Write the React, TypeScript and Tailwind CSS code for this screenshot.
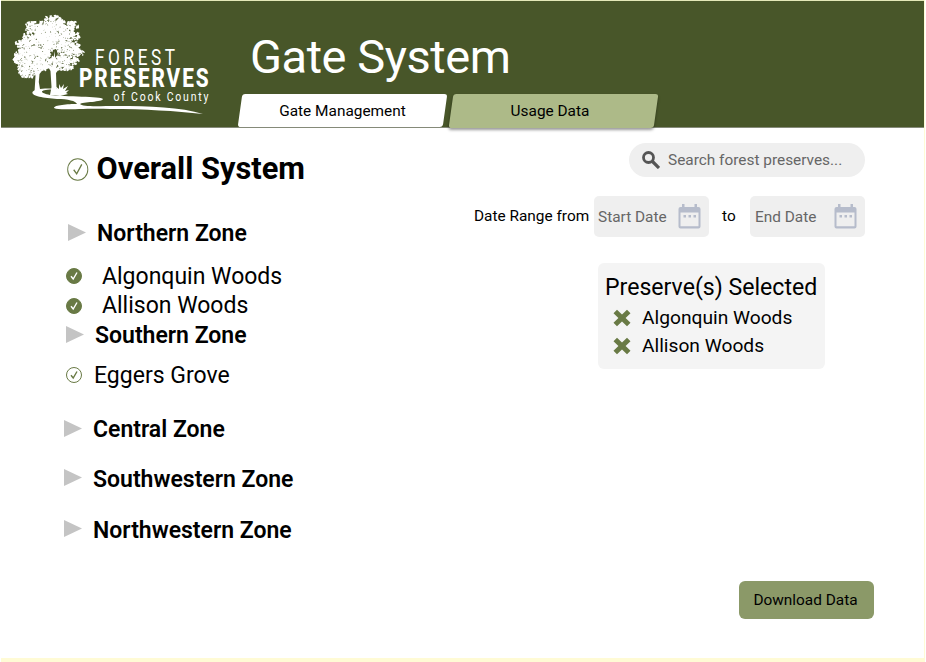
import React from "react";

const lobes: [number, number, number, number][] = [
  [53, 22, 9, 6], [33, 27, 8, 5], [43, 29, 9, 7], [66, 26, 12, 5], [60, 31, 12, 7],
  [37, 37, 13, 7], [52, 39, 12, 7], [70, 36, 9, 5], [24, 44, 8, 4], [35, 47, 14, 7],
  [63, 44, 9, 6], [73, 46, 7, 5], [49, 47, 7, 7], [22, 54, 7, 5], [32, 56, 13, 8],
  [18, 60, 6, 3], [44, 58, 8, 7], [67, 53, 11, 4], [77, 53, 7, 3], [60, 60, 9, 5],
  [71, 61, 8, 4], [27, 66, 9, 5], [39, 67, 8, 4], [59, 67, 7, 3], [28, 74, 7, 4],
  [23, 69, 5, 4], [67, 67, 6, 3], [46, 65, 5, 4],
];

function makeFoliage() {
  let seed = 29;
  const rnd = () => {
    seed = (seed * 1103515245 + 12345) % 2147483648;
    return seed / 2147483648;
  };
  let leaves = "";
  let gaps = "";
  const leaf = (x: number, y: number, s: number) => {
    const p = [0, 1, 2, 3, 4].map((i) => {
      const a = (i / 5) * Math.PI * 2 + rnd();
      const r = s * (0.5 + rnd());
      return `${(x + Math.cos(a) * r).toFixed(1)} ${(y + Math.sin(a) * r).toFixed(1)}`;
    });
    return `M${p.join("L")}Z`;
  };
  lobes.forEach(([cx, cy, rx, ry]) => {
    for (let i = 0; i < rx * ry * 1.9; i++) {
      const a = rnd() * Math.PI * 2;
      const r = Math.pow(rnd(), 0.6) * 1.08;
      leaves += leaf(cx + Math.cos(a) * rx * r, cy + Math.sin(a) * ry * r, 1.25);
    }
    const count = cx > 50 ? 5 : 2;
    for (let i = 0; i < count; i++) {
      const a = rnd() * Math.PI * 2;
      const r = 0.4 + rnd() * 0.6;
      gaps += leaf(cx + Math.cos(a) * rx * r, cy + Math.sin(a) * ry * r, 0.5);
    }
  });
  return { leaves, gaps };
}

const foliage = makeFoliage();

function Logo() {
  return (
    <svg className="block h-[126px] w-[230px] shrink-0" viewBox="1 1 230 126" fill="#fff">
      <path d={foliage.leaves} />
      <path d={foliage.gaps} fill="#485629" />
      <path d="M53 50L56 49L58 54L55 58L52 55Z" fill="#485629" />
      <path d="M33 66L35.500 76L34.500 92L40.500 92L38.800 82L39.500 74L45 67L38 71Z" />
      <path d="M46 63L50.500 71L51.500 87L50 95L61 95L56.500 88L56 73L62 65L56 68L54.500 51L52.500 67Z" />
      <path d="M55 95L57 89L55 86L59 89L59 84L61 88L64 84L63 89L68 86L65 91L69 90L66 93L68 94L60 96Z" />
      <path d="M52 88.500C43 88 34 89 32.500 92C31 96 44 98 57 99C68 99 76 101 77 104C68 104 54 105 54 108C60 111 80 108 110 109C145 109 175 111 203 114C181 107 149 106 117 106C98 106 82 107 80 104C82 102 103 102 103 99C101 96 66 97 50 95C40 93 38 90 52 89.500Z" />
      <g fontFamily="Roboto, 'Liberation Sans', sans-serif">
        <text transform="translate(95 64.500) scale(.8 1)" fontSize="21.500" fontWeight="400" textLength="100" lengthAdjust="spacing">FOREST</text>
        <text transform="translate(79 87.300) scale(.82 1)" fontSize="25.300" fontWeight="800" textLength="158" lengthAdjust="spacing">PRESERVES</text>
        <text transform="translate(113.500 101) scale(.84 1)" fontSize="12.500" fontWeight="400" textLength="113" lengthAdjust="spacing">of Cook County</text>
      </g>
    </svg>
  );
}

function Arrow() {
  return (
    <svg className="mb-[2px] h-[17px] w-[18px] shrink-0" viewBox="0 0 18 17">
      <path d="M0 0L18 8.500L0 17Z" fill="#c4c4c4" />
    </svg>
  );
}

function Check({ filled = false, className, weight = 1 }: { filled?: boolean; className: string; weight?: number }) {
  return (
    <svg className={`shrink-0 ${className}`} viewBox="0 0 16 16" fill="none" preserveAspectRatio="none">
      <circle cx="8" cy="8" r="7.500" fill={filled ? "#697a45" : "none"} stroke="#697a45" strokeWidth={weight} />
      <path d="M5 8.200L7.200 11L11 4.500" stroke={filled ? "#fff" : "#697a45"} strokeWidth={weight * 1.4} />
    </svg>
  );
}

function Cross() {
  return (
    <svg className="mb-[2px] h-[18px] w-[18px]" viewBox="0 0 18 18">
      <path d="M0.500 4.200L4 0.700L9 5.500L14 0.700L17.500 4.200L12.600 9L17.500 13.800L14 17.300L9 12.500L4 17.300L0.500 13.800L5.400 9Z" fill="#697a45" />
    </svg>
  );
}

function CalendarIcon() {
  return (
    <svg className="mb-px h-[25px] w-[23px]" viewBox="0 0 23 25">
      <path fillRule="evenodd" fill="#b6bccb" d="M4 0H6.500V3H16.500V0H19V3H20.500Q22.500 3 22.500 5V22.500Q22.500 24.500 20.500 24.500H2.500Q.5 24.500 .5 22.500V5Q.5 3 2.500 3H4ZM2.500 8.500V22.300H20.500V8.500Z" />
      <path fill="#b6bccb" d="M5.500 11H8V13.500H5.500ZM10.500 11H13V13.500H10.500ZM15.500 11H18V13.500H15.500Z" />
    </svg>
  );
}

export default function App() {
  return (
    <div className="h-[662px] w-[926px] overflow-hidden bg-white pl-px font-['Roboto','Liberation_Sans',sans-serif] text-black">
      <div className="flex h-[662px] w-[924px] flex-col border-r border-b-4 border-[#fffbd5] bg-white">
        <header className="flex h-[128px] shrink-0 border-t border-b border-t-[#e4e8b8] border-b-[#858a79] bg-[#485629]">
          <Logo />
          <div className="flex flex-col pl-[9px]">
            <h1 className="h-[93px] pt-[28px] pl-[10px] text-[47px] leading-[56px] font-normal tracking-[-0.45px] whitespace-nowrap text-white">Gate System</h1>
            <nav className="flex h-[33px] gap-[6px] text-[15.4px]">
              <button className="relative h-[33px] w-[205px]">
                <span className="absolute inset-0 -skew-x-[8deg] rounded-[3px] bg-white" />
                <span className="relative top-px">Gate Management</span>
              </button>
              <button className="relative h-[34px] w-[205px]">
                <span className="absolute inset-0 -skew-x-[8deg] rounded-[3px] bg-[#adba88] shadow-[0_2px_3px_#0006]" />
                <span className="relative top-px pr-[7px]">Usage Data</span>
              </button>
            </nav>
          </div>
        </header>

        <main className="flex h-[530px]">
          <section className="w-[420px] pt-[24px] pl-[63px] text-[23px] leading-[30px] whitespace-nowrap">
            <div className="flex h-[31px] items-center gap-[8px] pl-[3px] text-[30.8px] font-bold">
              <Check weight={0.7} className="mt-[3px] h-[23px] w-[21.5px]" /><h2 className="mt-[2px]">Overall System</h2>
            </div>
            <div className="mt-[35px] flex h-[30px] items-center gap-[11px] pl-[4px] font-semibold"><Arrow /><h3 className="mt-[2px]">Northern Zone</h3></div>
            <div className="mt-[13px] flex h-[30px] items-center gap-[20px] pl-[2px]"><Check filled className="h-4 w-4" /><span className="mt-[2px]">Algonquin Woods</span></div>
            <div className="flex h-[29px] items-center gap-[20px] pl-[2px]"><Check filled className="h-4 w-4" /><span className="mt-px">Allison Woods</span></div>
            <div className="flex h-[30px] items-center gap-[11px] pl-[2px] font-semibold"><Arrow /><h3 className="mt-[2px]">Southern Zone</h3></div>
            <div className="mt-[10px] flex h-[30px] items-center gap-[12px] pl-[2px]"><Check className="h-4 w-4" /><span className="mt-[2px]">Eggers Grove</span></div>
            <div className="mt-[24px] flex h-[30px] items-center gap-[11px] font-semibold"><Arrow /><h3 className="mt-[2px]">Central Zone</h3></div>
            <div className="mt-[19px] flex h-[30px] items-center gap-[11px] font-semibold"><Arrow /><h3 className="mt-[3px]">Southwestern Zone</h3></div>
            <div className="mt-[21px] flex h-[30px] items-center gap-[11px] font-semibold"><Arrow /><h3 className="mt-[4px]">Northwestern Zone</h3></div>
          </section>

          <section className="flex w-[503px] flex-col pt-[15px] whitespace-nowrap">
            <div className="ml-[208px] flex h-[34px] w-[236px] items-center rounded-full bg-[#efefef] pl-[13px] text-[15.4px] text-[#666]">
              <svg className="h-[18px] w-[18px]" viewBox="0 0 18 18" fill="none" stroke="#555">
                <circle cx="6.500" cy="6.500" r="5" strokeWidth="2.800" /><path d="M10 10L17 17" strokeWidth="3.200" />
              </svg>
              <span className="ml-[8px] pt-[2px]">Search forest preserves...</span>
            </div>
            <div className="mt-[19px] flex h-[41px] items-center text-[15.4px]">
              <span className="w-[173px] pt-px pl-[53px]">Date Range from</span>
              <div className="flex h-[41px] w-[114.5px] items-center justify-between rounded-[5px] bg-[#efefef] pr-[8px] pl-[4px] text-[#666]"><span className="pt-[3px]">Start Date</span><CalendarIcon /></div>
              <span className="w-[41.5px] pt-px pl-[13.5px]">to</span>
              <div className="flex h-[41px] w-[115px] items-center justify-between rounded-[5px] bg-[#efefef] pr-[8px] pl-[5px] text-[#666]"><span className="pt-[3px]">End Date</span><CalendarIcon /></div>
            </div>
            <aside className="mt-[26px] ml-[177px] h-[106px] w-[227px] rounded-[6px] bg-[#f4f4f4] pt-[9px] pl-[7px]">
              <h2 className="pt-px text-[23.1px] leading-[29px]">Preserve(s) Selected</h2>
              <div className="mt-[3px] flex h-[28px] items-center gap-[11px] pl-[8px] text-[19.2px]"><Cross /><span className="mb-px">Algonquin Woods</span></div>
              <div className="flex h-[27px] items-center gap-[11px] pl-[8px] text-[19.2px]"><Cross /><span>Allison Woods</span></div>
            </aside>
            <button className="mt-[212px] ml-[318px] h-[38px] w-[135px] rounded-[6px] bg-[#8b9968] pt-[2px] pr-[2px] text-[15.4px]">Download Data</button>
          </section>
        </main>
      </div>
    </div>
  );
}
